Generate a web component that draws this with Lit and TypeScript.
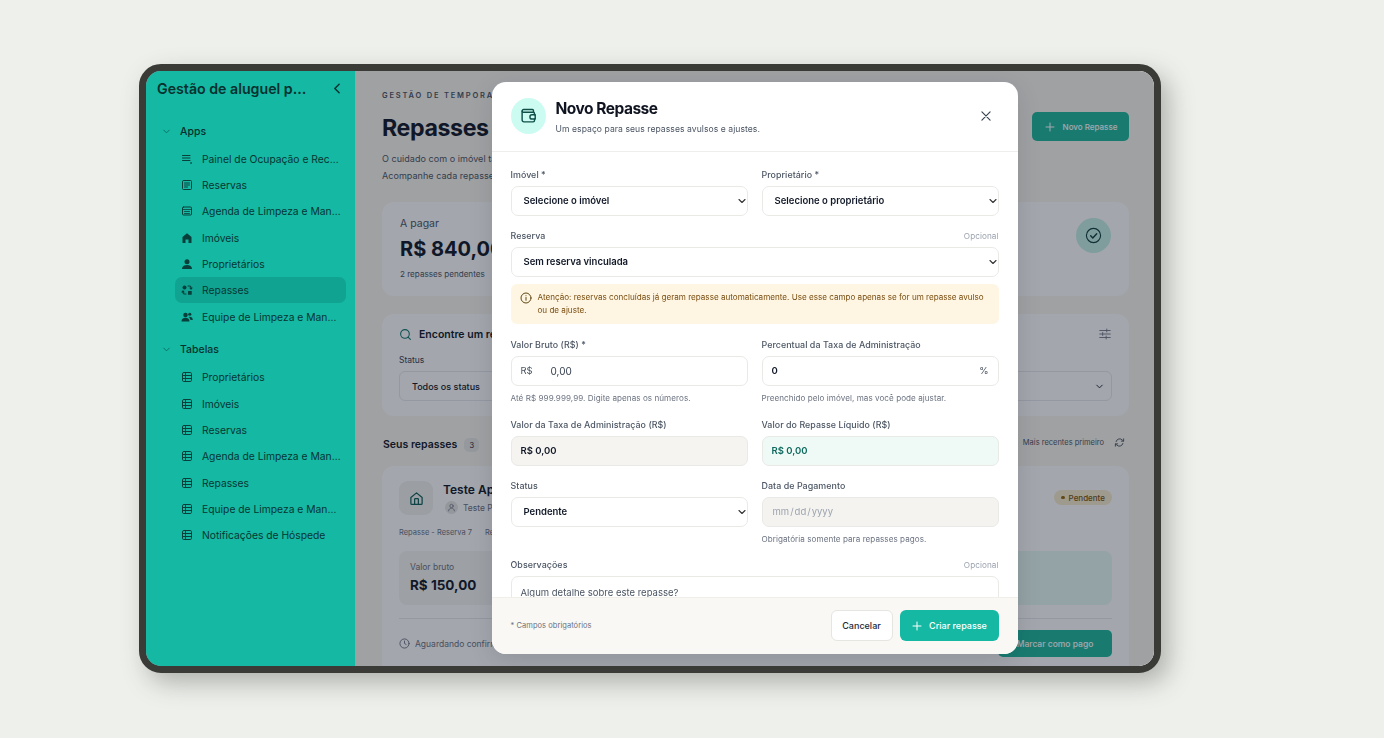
import { LitElement, html, css, svg } from "lit";
import { customElement } from "lit/decorators.js";

const ic = (body: unknown, size = 12, cls = "") => html`<svg class=${cls} width=${size} height=${size} viewBox="0 0 24 24" fill="none" stroke="currentColor" stroke-width="2" stroke-linecap="round" stroke-linejoin="round">${body}</svg>`;

const I = {
  chevD: svg`<path d="M6 9l6 6 6-6"/>`,
  chevL: svg`<path d="M15 4l-8 8 8 8" stroke-width="2.6"/>`,
  panel: svg`<path d="M3 5h15M3 10h15M3 15h15" stroke-width="2"/><path d="M20 19h1v2h-1z" stroke-width="1.4"/>`,
  list: svg`<rect x="3" y="3" width="18" height="18" rx="2"/><path d="M7 8h10M7 12h10M7 16h6"/>`,
  cal: svg`<rect x="3" y="4" width="18" height="16" rx="2"/><path d="M3 9h18M7 13h10M7 17h10" stroke-width="1.6"/>`,
  home: svg`<path fill="currentColor" stroke="none" d="M12 2.500 3 10v11a1 1 0 0 0 1 1h5v-7h6v7h5a1 1 0 0 0 1-1V10z"/>`,
  person: svg`<circle cx="12" cy="7.500" r="5" fill="currentColor" stroke="none"/><path fill="currentColor" stroke="none" d="M2 22c0-5 4-8 10-8s10 3 10 8z"/>`,
  swap: svg`<g fill="currentColor" stroke="none"><circle cx="7" cy="7" r="4"/><rect x="14" y="14" width="7.500" height="7.500" rx="1"/></g><path d="M14 4h3a3 3 0 0 1 3 3v3M22 8l-2 2.400L18 8M10 20H7a3 3 0 0 1-3-3v-3M2 16l2-2.400L6 16" stroke-width="2.200"/>`,
  team: svg`<g fill="currentColor" stroke="none"><circle cx="9" cy="8" r="4.500"/><path d="M1 21c0-5 3-7.500 8-7.500s8 2.500 8 7.500z"/><circle cx="17.500" cy="6.500" r="3.200"/><path d="M17 11.500c4 0 6.500 2 6.500 6.500H19c-.5-2.500-1.500-4-3.500-5.500z"/></g>`,
  table: svg`<rect x="3" y="3" width="18" height="18" rx="2.500"/><path d="M3 9h18M3 15h18M9 3v18"/>`,
  wallet: svg`<path d="M19 7V5a1.500 1.500 0 0 0-1.500-1.500H5A2 2 0 0 0 3 5.500v13A2.500 2.500 0 0 0 5.500 21h13a2 2 0 0 0 2-2v-2"/><path d="M3 6c0 1 1 1.500 2 1.500h13.500a2 2 0 0 1 2 2V11"/><path d="M21.500 11H17a2.500 2.500 0 0 0 0 6h4.500z"/>`,
  x: svg`<path d="M5 5l14 14M19 5L5 19"/>`,
  info: svg`<circle cx="12" cy="12" r="10"/><path d="M12 11v5.500M12 7.500v.1"/>`,
  plus: svg`<path d="M12 4v16M4 12h16"/>`,
  search: svg`<circle cx="11" cy="11" r="8"/><path d="M21 21l-4.300-4.300"/>`,
  check: svg`<circle cx="12" cy="12" r="10" stroke-width="1.600"/><path d="M8 12.500l3 3 5.500-6"/>`,
  sliders: svg`<path d="M3 6h18M3 12h18M3 18h18" stroke-width="1.500"/><path d="M15 3.500v5M8 9.500v5M14 15.500v5" stroke-width="1.500"/>`,
  refresh: svg`<path d="M21 4v5h-5"/><path d="M3 20v-5h5"/><path d="M4.500 10a8 8 0 0 1 14-3l2.500 2M19.500 14a8 8 0 0 1-14 3L3 15"/>`,
  houseLine: svg`<path d="M3 10.500 12 3l9 7.500V20a1.500 1.500 0 0 1-1.500 1.500h-15A1.500 1.500 0 0 1 3 20z"/><path d="M9 21.500V13a1 1 0 0 1 1-1h4a1 1 0 0 1 1 1v8.500"/>`,
  user: svg`<circle cx="12" cy="8" r="4.500"/><path d="M4 21c1-5 4-7 8-7s7 2 8 7"/>`,
  clock: svg`<circle cx="12" cy="12" r="10"/><path d="M12 6.500V12l3.500 2"/>`,
};

@customElement("app-root")
export class AppRoot extends LitElement {
  static styles = css`
    :host { display: block; height: 738px; background: #eef0ec; font-family: Inter, "Liberation Sans", sans-serif; overflow: hidden; }
    * { box-sizing: border-box; }
    .stage { padding: 64px 0 0 139px; }
    .frame { width: 1022px; height: 609px; border: 7px solid #3a3a37; border-radius: 22px; display: flex; overflow: hidden; background: #a9a9ac; box-shadow: 8px 10px 24px rgba(60,65,55,.35); position: relative; }
    .side { width: 209px; flex: none; background: #14b8a3; color: #083f3b; padding: 0 9px 0 11px; }
    .brand { height: 34px; display: flex; align-items: center; justify-content: space-between; padding: 0 2px 0 0; font-size: 14.200px; font-weight: 600; color: #07302e; }
    .brand span { white-space: nowrap; overflow: hidden; text-overflow: ellipsis; width: 154px; }
    .grp { height: 26px; margin-top: 13px; display: flex; align-items: center; font-size: 10.500px; font-weight: 500; color: #07302e; gap: 8px; padding-left: 4px; }
    .grp svg { color: #0b6d64; }
    .grp + .nav { margin-top: 1.600px; }
    .nav { display: flex; flex-direction: column; }
    .item { height: 26.300px; display: flex; align-items: center; gap: 9px; font-size: 10.300px; font-weight: 400; color: #083532; border-radius: 7px; margin-left: 18px; padding-left: 6px; }
    .item svg { flex: none; color: #083f3b; }
    .item span { white-space: nowrap; overflow: hidden; text-overflow: ellipsis; width: 139px; }
    .item.on { background: #10a392; }
    .grp.two { margin-top: 7px; }

    .main { flex: 1; position: relative; overflow: hidden; background: #f9f6ee; padding: 20px 25px 0 27px; color: #1f2937; }
    .eyebrow { font-size: 7.500px; font-weight: 600; letter-spacing: 1.800px; color: #4b5563; height: 10px; }
    .head { display: flex; justify-content: space-between; }
    h1 { margin: 11px 0 0; font-size: 23.200px; font-weight: 700; letter-spacing: -.4px; line-height: 32px; color: #111827; }
    .lead { margin-top: 6px; font-size: 9px; letter-spacing: .05px; line-height: 17px; color: #4b5563; white-space: nowrap; }
    .newbtn { height: 29px; margin-top: 21px; width: 97px; border-radius: 5px; background: #1fb99c; color: #fff; display: flex; align-items: center; justify-content: center; gap: 7px; font-size: 8px; font-weight: 500; }
    .card { background: #fdfdfd; border-radius: 12px; }
    .stat { margin-top: 18px; height: 94px; padding: 16px 18px; display: flex; justify-content: space-between; position: relative; }
    .stat .k { font-size: 10.500px; color: #4b5563; line-height: 12px; }
    .stat .v { font-size: 20px; font-weight: 700; color: #111827; line-height: 26px; margin-top: 6px; }
    .stat .s { font-size: 8.100px; color: #4b5563; margin-top: 7px; }
    .okc { width: 35px; height: 35px; border-radius: 50%; background: #c4efe4; color: #0f3f3a; display: flex; align-items: center; justify-content: center; }
    .filt { margin-top: 18px; height: 102px; padding: 13px 17px; }
    .ft { display: flex; align-items: center; gap: 7px; font-size: 10.500px; font-weight: 600; color: #111827; height: 14px; }
    .ft .si { color: #0f766e; display: flex; }
    .ft .sl { margin-left: auto; color: #6b7280; display: flex; }
    .flab { font-size: 8.500px; color: #374151; margin-top: 14px; height: 12px; }
    .fsel { margin-top: 4px; height: 30px; border: 1px solid #e5e7eb; border-radius: 6px; display: flex; align-items: center; justify-content: space-between; padding: 0 6px 0 12px; font-size: 9px; font-weight: 500; color: #111827; }
    .lst { display: flex; align-items: center; justify-content: space-between; margin-top: 18px; height: 16px; padding-left: 1px; }
    .lst b { font-size: 10.500px; font-weight: 600; color: #111827; }
    .cnt { display: inline-flex; width: 15px; height: 14px; align-items: center; justify-content: center; border-radius: 5px; background: #e7e7e4; font-size: 7.500px; margin-left: 7px; }
    .lst .r { display: flex; align-items: center; gap: 10px; font-size: 7.500px; color: #4b5563; padding-right: 4px; }
    .lcard { margin-top: 16px; padding: 15px 17px; height: 230px; }
    .lrow { display: flex; align-items: flex-start; gap: 10px; }
    .tile { width: 34px; height: 34px; border-radius: 9px; background: #f0f1ee; color: #0f5f58; display: flex; align-items: center; justify-content: center; flex: none; }
    .lname { font-size: 12px; font-weight: 600; color: #111827; line-height: 16px; margin-top: 1px; }
    .lown { font-size: 8.500px; color: #6b7280; display: flex; align-items: center; gap: 5px; margin-top: 3px; margin-left: 2px; }
    .ava { width: 13px; height: 13px; border-radius: 50%; background: #e5e5e2; display: flex; align-items: center; justify-content: center; }
    .pill { margin-left: auto; margin-top: 9px; height: 15px; width: 58px; border-radius: 8px; background: #f6eccb; color: #78510f; font-size: 8px; display: flex; align-items: center; justify-content: center; gap: 4px; font-weight: 500; }
    .pill i { width: 3.500px; height: 3.500px; border-radius: 50%; background: #92680e; }
    .refs { display: flex; gap: 13px; margin-top: 13px; font-size: 7.500px; color: #6b7280; height: 12px; }
    .mets { display: flex; justify-content: space-between; margin-top: 11px; }
    .met { width: 200px; height: 54px; border-radius: 8px; background: #f4f4f1; padding: 11px 11px; }
    .met.g { background: #e6f8f2; width: 240px; }
    .met .a { font-size: 8.500px; color: #6b7280; }
    .met .b { font-size: 13.500px; font-weight: 700; color: #111827; margin-top: 5px; }
    .dv { height: 1px; background: #e5e7eb; margin-top: 13px; }
    .lf { display: flex; justify-content: space-between; align-items: center; margin-top: 11px; font-size: 8.500px; color: #6b7280; }
    .lf .w { display: flex; align-items: center; gap: 5px; }
    .pay { width: 114px; height: 27px; background: #1fb99c; color: #fff; border-radius: 5px; font-size: 8.500px; font-weight: 500; display: flex; align-items: center; justify-content: center; }

    .ov { position: absolute; inset: -4px; padding-bottom: 2px; background: rgba(15,23,42,.38); backdrop-filter: blur(.7px); display: flex; align-items: center; justify-content: center; }
    .modal { width: 526px; height: 572px; background: #fff; border-radius: 14px; display: flex; flex-direction: column; overflow: hidden; color: #111827; box-shadow: 0 6px 24px rgba(0,0,0,.12); }
    .mh { height: 70px; flex: none; border-bottom: 1px solid #eeeeec; padding: 16px 19px 0; display: flex; gap: 10px; }
    .circ { width: 35px; height: 36px; border-radius: 50%; background: #ccfbf1; color: #0f4f49; display: flex; align-items: center; justify-content: center; flex: none; }
    .mt { font-size: 15.500px; font-weight: 700; letter-spacing: -.5px; line-height: 20px; color: #0f1420; margin-top: 1px; }
    .ms { font-size: 8.600px; color: #4b5563; margin-top: 4px; line-height: 12px; letter-spacing: .05px; }
    .cl { margin-left: auto; margin-right: 6px; margin-top: 9px; color: #374151; }
    .mb { flex: 1; min-height: 0; overflow: hidden; padding: 17px 19px 0; }
    .g2 { display: grid; grid-template-columns: 1fr 1fr; column-gap: 14px; }
    .lb { display: flex; justify-content: space-between; align-items: center; height: 12px; font-size: 8.900px; font-weight: 500; color: #4b5563; letter-spacing: .05px; white-space: nowrap; margin-bottom: 5px; }
    .lb em { font-style: normal; font-weight: 400; font-size: 8.200px; color: #9ca3af; }
    select, .fx, input[type=date], textarea { display: block; width: 100%; height: 30px; border: 1px solid #e9e9e6; border-radius: 7px; background: #fff; font-family: inherit; font-size: 9.500px; font-weight: 600; color: #111827; padding: 0 9px; outline: none; }
    select { appearance: none; padding-left: 12px; background: #fff url("data:image/svg+xml,%3Csvg xmlns='http://www.w3.org/2000/svg' width='8' height='8' viewBox='0 0 8 8' fill='none' stroke='%23333' stroke-width='1.100' stroke-linecap='round' stroke-linejoin='round'%3E%3Cpath d='M1 2.500l3 3 3-3'/%3E%3C/svg%3E") no-repeat right 1px center; }
    .fx { display: flex; align-items: center; }
    .fx .p { color: #4b5563; font-weight: 400; width: 30px; }
    .fx .n { color: #374151; font-weight: 400; font-size: 10px; }
    .fx .pc { margin-left: auto; font-weight: 400; color: #4b5563; }
    .fx.ro { background: #f5f4f1; }
    .fx.gr { background: #effaf6; color: #0f6a5e; }
    input[type=date] { background: #f4f3f0; color: #9ca3af; font-weight: 400; font-size: 9.500px; }
    textarea { height: 60px; resize: none; padding: 10px 9px; font-weight: 400; font-size: 9.500px; }
    textarea::placeholder { color: #4b5563; opacity: 1; }
    .r2 { margin-top: 14px; }
    .r3 { margin-top: 15px; }
    .r1 { margin-top: 13px; }
    .warn { margin-top: 7px; height: 40px; border-radius: 6px; background: #fef6e3; color: #7a4d10; font-size: 8.100px; line-height: 13px; padding: 7px 9px; display: flex; gap: 6px; }
    .warn svg { flex: none; margin-top: 1px; color: #5f4510; }
    .hp { font-size: 8.100px; color: #6b7280; margin-top: 7px; height: 12px; letter-spacing: .05px; }
    .foot { height: 57px; flex: none; background: #faf8f4; border-top: 1px solid #f1efea; padding: 0 19px; display: flex; align-items: center; gap: 7px; }
    .foot .nt { font-size: 7.500px; color: #6b7280; margin-right: auto; letter-spacing: .05px; }
    .bt { height: 31px; border-radius: 6px; display: flex; align-items: center; justify-content: center; font-size: 9px; font-weight: 500; }
    .bt.c { width: 62px; background: #fff; border: 1px solid #e5e5e2; color: #1f2937; }
    .bt.p { width: 99px; background: #14b8a3; color: #fff; gap: 6px; }
  `;

  private navItem(icon: unknown, text: string, on = false) {
    return html`<div class="item ${on ? "on" : ""}">${ic(icon, 12)}<span>${text}</span></div>`;
  }

  private field(label: string, body: unknown, opt = false, help = "") {
    return html`<div>
      <div class="lb"><span>${label}</span>${opt ? html`<em>Opcional</em>` : ""}</div>
      ${body}
      ${help ? html`<div class="hp">${help}</div>` : ""}
    </div>`;
  }

  private sel(text: string) {
    return html`<select><option>${text}</option></select>`;
  }

  render() {
    return html`<div class="stage"><div class="frame">
      <aside class="side">
        <div class="brand"><span>Gestão de aluguel por temporada</span>${ic(I.chevL, 13)}</div>
        <div class="grp">${ic(I.chevD, 11)}<span>Apps</span></div>
        <div class="nav">
          ${this.navItem(I.panel, "Painel de Ocupação e Recebimentos")}
          ${this.navItem(I.list, "Reservas")}
          ${this.navItem(I.cal, "Agenda de Limpeza e Manutenção")}
          ${this.navItem(I.home, "Imóveis")}
          ${this.navItem(I.person, "Proprietários")}
          ${this.navItem(I.swap, "Repasses", true)}
          ${this.navItem(I.team, "Equipe de Limpeza e Manutenção")}
        </div>
        <div class="grp two">${ic(I.chevD, 11)}<span>Tabelas</span></div>
        <div class="nav">
          ${["Proprietários", "Imóveis", "Reservas", "Agenda de Limpeza e Manutenção", "Repasses", "Equipe de Limpeza e Manutenção", "Notificações de Hóspede"].map((t) => this.navItem(I.table, t))}
        </div>
      </aside>
      <main class="main">
        <div class="head">
          <div>
            <div class="eyebrow">GESTÃO DE TEMPORADA</div>
            <h1>Repasses</h1>
            <div class="lead">O cuidado com o imóvel também é cuidar de quem confia em você.<br />Acompanhe cada repasse, do pendente ao pago.</div>
          </div>
          <div class="newbtn">${ic(I.plus, 12)}<span>Novo Repasse</span></div>
        </div>
        <div class="card stat">
          <div><div class="k">A pagar</div><div class="v">R$ 840,00</div><div class="s">2 repasses pendentes</div></div>
          <div class="okc">${ic(I.check, 17)}</div>
        </div>
        <div class="card filt">
          <div class="ft"><span class="si">${ic(I.search, 13)}</span><span>Encontre um repasse</span><span class="sl">${ic(I.sliders, 14)}</span></div>
          <div class="flab">Status</div>
          <div class="fsel"><span>Todos os status</span>${ic(I.chevD, 11)}</div>
        </div>
        <div class="lst">
          <div><b>Seus repasses</b><span class="cnt">3</span></div>
          <div class="r"><span>Mais recentes primeiro</span>${ic(I.refresh, 11)}</div>
        </div>
        <div class="card lcard">
          <div class="lrow">
            <div class="tile">${ic(I.houseLine, 15)}</div>
            <div>
              <div class="lname">Teste Apto 101</div>
              <div class="lown"><span class="ava">${ic(I.user, 9)}</span><span>Teste Proprietário</span></div>
            </div>
            <div class="pill"><i></i><span>Pendente</span></div>
          </div>
          <div class="refs"><span>Repasse - Reserva 7</span><span>Reserva</span></div>
          <div class="mets">
            <div class="met"><div class="a">Valor bruto</div><div class="b">R$ 150,00</div></div>
            <div class="met g"></div>
          </div>
          <div class="dv"></div>
          <div class="lf">
            <div class="w">${ic(I.clock, 11)}<span>Aguardando confirmação</span></div>
            <div class="pay">Marcar como pago</div>
          </div>
        </div>
        <div class="ov">
          <div class="modal">
            <div class="mh">
              <div class="circ">${ic(I.wallet, 17)}</div>
              <div><div class="mt">Novo Repasse</div><div class="ms">Um espaço para seus repasses avulsos e ajustes.</div></div>
              <div class="cl">${ic(I.x, 14)}</div>
            </div>
            <div class="mb">
              <div class="g2">
                ${this.field("Imóvel *", this.sel("Selecione o imóvel"))}
                ${this.field("Proprietário *", this.sel("Selecione o proprietário"))}
              </div>
              <div class="r2">${this.field("Reserva", this.sel("Sem reserva vinculada"), true)}</div>
              <div class="warn">${ic(I.info, 12)}<span>Atenção: reservas concluídas já geram repasse automaticamente. Use esse campo apenas se for um repasse avulso ou de ajuste.</span></div>
              <div class="g2 r3">
                ${this.field("Valor Bruto (R$) *", html`<div class="fx"><span class="p">R$</span><span class="n">0,00</span></div>`, false, "Até R$ 999.999,99. Digite apenas os números.")}
                ${this.field("Percentual da Taxa de Administração", html`<div class="fx"><span>0</span><span class="pc">%</span></div>`, false, "Preenchido pelo imóvel, mas você pode ajustar.")}
              </div>
              <div class="g2 r2">
                ${this.field("Valor da Taxa de Administração (R$)", html`<div class="fx ro">R$ 0,00</div>`)}
                ${this.field("Valor do Repasse Líquido (R$)", html`<div class="fx gr">R$ 0,00</div>`)}
              </div>
              <div class="g2 r2">
                ${this.field("Status", this.sel("Pendente"))}
                ${this.field("Data de Pagamento", html`<input type="date" disabled />`, false, "Obrigatória somente para repasses pagos.")}
              </div>
              <div class="r1">${this.field("Observações", html`<textarea placeholder="Algum detalhe sobre este repasse?"></textarea>`, true)}</div>
            </div>
            <div class="foot">
              <span class="nt">* Campos obrigatórios</span>
              <div class="bt c">Cancelar</div>
              <div class="bt p">${ic(I.plus, 12)}<span>Criar repasse</span></div>
            </div>
          </div>
        </div>
      </main>
    </div></div>`;
  }
}
